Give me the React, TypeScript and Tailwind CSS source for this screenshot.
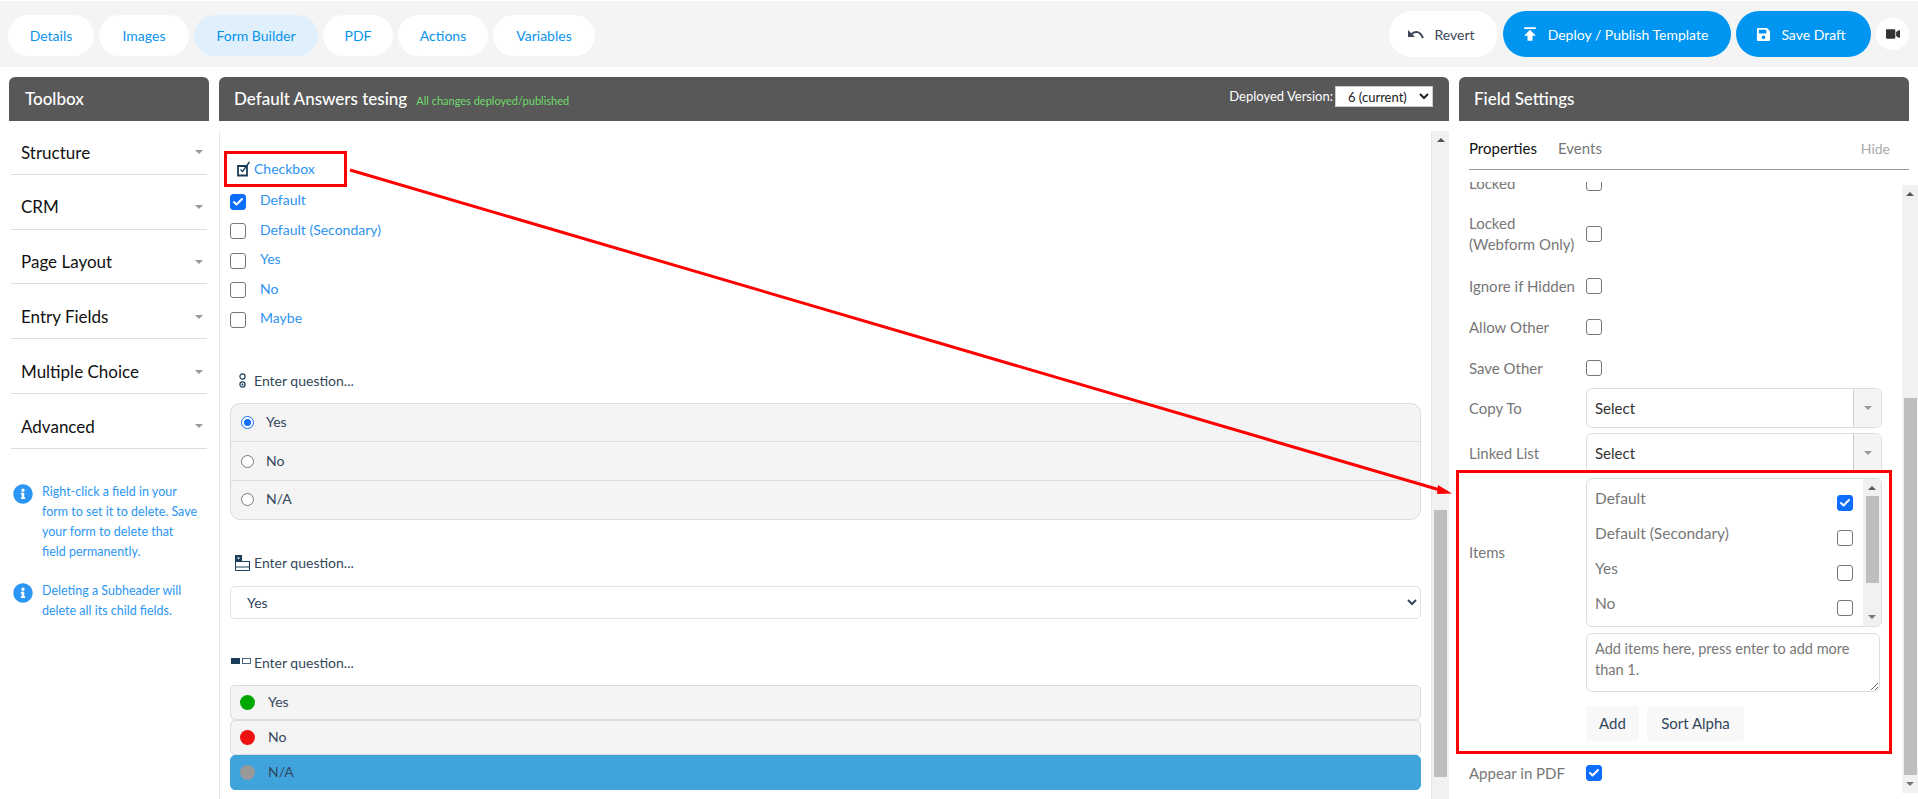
import { FaInfoCircle, FaSave, FaVideo } from 'react-icons/fa';
import { MdPublish } from 'react-icons/md';
import { Check } from 'lucide-react';

const tabs = [
  { label: 'Details', w: 'w-[86px]' },
  { label: 'Images', w: 'w-[90px]' },
  { label: 'Form Builder', w: 'w-[124px]', active: true },
  { label: 'PDF', w: 'w-[70px]' },
  { label: 'Actions', w: 'w-[90px]' },
  { label: 'Variables', w: 'w-[102px]' },
];

const toolbox = ['Structure', 'CRM', 'Page Layout', 'Entry Fields', 'Multiple Choice', 'Advanced'];
const checkOptions = ['Default', 'Default (Secondary)', 'Yes', 'No', 'Maybe'];

function Caret({ className = 'border-t-[#999]' }: { className?: string }) {
  return <span className={`h-0 w-0 border-x-[4px] border-t-[4px] border-x-transparent ${className}`} />;
}

function Box({ checked = false }: { checked?: boolean }) {
  return (
    <span
      className={`flex h-4 w-4 shrink-0 items-center justify-center rounded-[3px] border ${
        checked ? 'border-[#0d6efd] bg-[#0d6efd]' : 'border-[#777] bg-white'
      }`}
    >
      {checked && <Check className="h-3 w-3 text-white" strokeWidth={4} />}
    </span>
  );
}

function Radio({ checked = false }: { checked?: boolean }) {
  return (
    <span
      className={`flex h-[13px] w-[13px] items-center justify-center rounded-full border bg-white ${
        checked ? 'border-[#0d6efd]' : 'border-[#777]'
      }`}
    >
      {checked && <span className="h-[7px] w-[7px] rounded-full bg-[#0d6efd]" />}
    </span>
  );
}

function Question({ icon, className }: { icon: React.ReactNode; className: string }) {
  return (
    <div className={`flex h-5 items-center text-[14px] text-[#33475b] ${className}`}>
      <span className="flex h-5 w-6 items-center">{icon}</span>
      Enter question...
    </div>
  );
}

function ScrollTrack({ thumb, className, down = true }: { thumb: string; className: string; down?: boolean }) {
  return (
    <div className={`flex shrink-0 flex-col items-center bg-[#f1f1f1] ${className}`}>
      <span className="mt-[7px] h-0 w-0 border-x-[4px] border-b-[4px] border-x-transparent border-b-[#555]" />
      <div className={`w-[13px] bg-[#bebebe] ${thumb}`} />
      {down && <span className="mb-[7px] mt-auto h-0 w-0 border-x-[4px] border-t-[4px] border-x-transparent border-t-[#777]" />}
    </div>
  );
}

function SelectBox({ className = '' }: { className?: string }) {
  return (
    <div className={`flex h-10 w-[296px] overflow-hidden rounded-md border border-[#ddd] ${className}`}>
      <div className="flex flex-1 items-center pl-2 text-[15px] text-[#333]">Select</div>
      <div className="flex w-[28px] items-center justify-center border-l border-[#ccc] bg-[#f4f4f4]">
        <Caret />
      </div>
    </div>
  );
}

function Row({ label, className = 'h-[34px]', children }: { label: React.ReactNode; className?: string; children: React.ReactNode }) {
  return (
    <div className={`flex items-center text-[15px] text-[#777] ${className}`}>
      <div className="w-[117px] shrink-0 whitespace-nowrap leading-[21px]">{label}</div>
      {children}
    </div>
  );
}

export default function App() {
  return (
    <div className="relative h-[799px] w-[1918px] overflow-hidden bg-white pt-px font-['Lato','Noto_Sans',sans-serif]">
      {/* Top bar */}
      <div className="flex h-[66px] items-center justify-between bg-[#f4f4f4] pl-2 pr-[9px]">
        <div className="flex gap-[5px] pt-[3px]">
          {tabs.map((t) => (
            <div
              key={t.label}
              className={`flex h-[41px] items-center justify-center rounded-full text-[14px] text-[#0a93ea] ${t.w} ${
                t.active ? 'bg-[#dff0fc]' : 'bg-white'
              }`}
            >
              {t.label}
            </div>
          ))}
        </div>
        <div className="flex items-center gap-[5px]">
          <button className="flex h-[46px] w-[109px] items-center justify-center gap-[10px] rounded-full bg-white pr-[4px] text-[14px] text-[#3d4659]">
            <svg viewBox="0 0 16 10" className="h-[10px] w-4">
              <path d="M0 1v7h7z" fill="currentColor" />
              <path d="M3 5.5C7 1.5 12 2 15 9" fill="none" stroke="currentColor" strokeWidth="2" />
            </svg>
            Revert
          </button>
          <button className="flex h-[46px] w-[228px] items-center justify-center gap-2 rounded-full bg-[#0095f0] pr-[6px] text-[14px] text-white">
            <MdPublish className="h-5 w-5" />
            Deploy / Publish Template
          </button>
          <button className="flex h-[46px] w-[135px] items-center justify-center gap-[10px] rounded-full bg-[#0095f0] pr-[5px] text-[14px] text-white">
            <FaSave className="h-[15px] w-[15px]" />
            Save Draft
          </button>
          <button className="flex h-[32px] w-[33px] items-center justify-center rounded-full bg-white text-[#333]">
            <FaVideo className="h-[14px] w-[14px]" />
          </button>
        </div>
      </div>

      {/* Panels */}
      <div className="mt-[10px] flex h-[722px] pl-[9px]">
        {/* Toolbox */}
        <div className="w-[200px] shrink-0">
          <div className="flex h-11 items-center rounded-t-md bg-[#585858] px-4 text-[17px] font-medium text-white">Toolbox</div>
          <div className="-mt-px px-[2px]">
            {toolbox.map((name) => (
              <div key={name} className="flex h-[54.8px] items-center justify-between border-b border-[#ddd] pl-[10px] pr-[4px] pt-[11px] text-[17px] text-[#111]">
                {name}
                <Caret />
              </div>
            ))}
          </div>
          <div className="mt-[34px] flex flex-col gap-[20px] pl-1 text-[12.5px] leading-[20px] text-[#2b96f3]">
            <div className="flex gap-[9px]">
              <FaInfoCircle className="mt-[1px] h-5 w-5 shrink-0" />
              <p className="-mt-[1px] w-[158px]">Right-click a field in your form to set it to delete. Save your form to delete that field permanently.</p>
            </div>
            <div className="flex gap-[9px]">
              <FaInfoCircle className="mt-[1px] h-5 w-5 shrink-0" />
              <p className="-mt-[1px] w-[158px]">Deleting a Subheader will delete all its child fields.</p>
            </div>
          </div>
        </div>

        {/* Form canvas */}
        <div className="ml-[10px] w-[1230px] shrink-0">
          <div className="flex h-11 items-center justify-between rounded-t-md bg-[#585858] pl-[15px] pr-4 text-white">
            <div className="flex items-center gap-[9px]">
              <span className="text-[17px] font-medium">Default Answers tesing</span>
              <span className="pt-[4px] text-[11px] text-[#6fdc6a]">All changes deployed/published</span>
            </div>
            <div className="mb-[5px] flex items-center gap-[2px] text-[13px]">
              Deployed Version:
              <select defaultValue="6" className="h-[21px] w-[98px] border border-[#ccc] bg-white pl-2 text-[13px] text-[#222]">
                <option value="6">6 (current)</option>
              </select>
            </div>
          </div>
          <div className="mt-[10px] flex h-[668px] overflow-hidden">
            <div className="flex-1 border-l border-[#e6e6e6] pl-[10px] pr-[10px]">
              <div className="-ml-[6px] mt-5 flex h-9 w-[123px] items-center border-[3px] border-[#f00] pl-[10px] text-[14px] text-[#2e93f0]">
                <svg viewBox="0 0 14 16" className="mr-[3px] h-4 w-[14px] text-[#1c3d5a]">
                  <path d="M1 5h9v9.5H1z" fill="none" stroke="currentColor" strokeWidth="1.8" />
                  <path d="M3.5 8.5l2 2L12.5 1" fill="none" stroke="currentColor" strokeWidth="1.4" />
                </svg>
                <span className="mb-px">Checkbox</span>
              </div>
              {checkOptions.map((o, i) => (
                <div key={o} className="flex h-[29.5px] items-center gap-[14px] text-[14px] text-[#2e93f0]">
                  <Box checked={i === 0} />
                  <span className="mb-1">{o}</span>
                </div>
              ))}

              <Question
                className="mt-[36px]"
                icon={
                  <svg viewBox="0 0 7 16" className="ml-[9px] h-4 w-[7px] text-[#1c3d5a]">
                    <circle cx="3.5" cy="3.5" r="2.6" fill="none" stroke="currentColor" strokeWidth="1.2" />
                    <circle cx="3.5" cy="11.5" r="2.6" fill="none" stroke="currentColor" strokeWidth="1.2" />
                    <circle cx="3.5" cy="11.5" r="1" fill="currentColor" />
                  </svg>
                }
              />
              <div className="mt-3 flex h-[117px] flex-col overflow-hidden rounded-[10px] border border-[#dcdcdc] bg-[#f4f4f4] text-[14px] text-[#33475b]">
                {['Yes', 'No', 'N/A'].map((o, i) => (
                  <div key={o} className={`flex flex-1 items-center gap-3 pl-[10px] ${i < 2 ? 'border-b border-[#dcdcdc]' : ''}`}>
                    <Radio checked={i === 0} />
                    <span className="mb-[2px]">{o}</span>
                  </div>
                ))}
              </div>

              <Question
                className="mt-[33px]"
                icon={
                  <svg viewBox="0 0 15 16" className="ml-[5px] h-4 w-[15px] text-[#1c3d5a]">
                    <path d="M0 0h7v6H0z" fill="currentColor" />
                    <path d="M2 2.5h3L3.5 4.5z" fill="#fff" />
                    <path d="M0 6h15v1H0z" fill="currentColor" />
                    <path d="M.5 7v8.5h14V7" fill="none" stroke="currentColor" />
                    <path d="M1 11h13v2H1z" fill="#8aa0ac" />
                  </svg>
                }
              />
              <select defaultValue="Yes" className="mt-[13px] h-[33px] w-full rounded-[5px] border border-[#dde3ea] bg-white pl-[12px] text-[14px] text-[#33475b]">
                <option>Yes</option>
              </select>

              <Question
                className="mt-[34px]"
                icon={
                  <svg viewBox="0 0 20 6" className="ml-[1px] mb-[3px] h-[6px] w-[20px] text-[#1c3d5a]">
                    <rect width="9" height="6" fill="currentColor" />
                    <rect x="11.5" y=".5" width="8" height="5" fill="none" stroke="currentColor" strokeWidth=".8" />
                  </svg>
                }
              />
              <div className="mt-3 flex flex-col text-[14px] text-[#33475b]">
                {[
                  { o: 'Yes', dot: 'bg-[#00a800]', row: 'border-[#dcdcdc] bg-[#f4f4f4]' },
                  { o: 'No', dot: 'bg-[#ee1111]', row: 'border-[#dcdcdc] bg-[#f4f4f4]' },
                  { o: 'N/A', dot: 'bg-[#999]', row: 'border-[#3fa4dc] bg-[#3fa4dc]' },
                ].map((r) => (
                  <div key={r.o} className={`flex h-[35px] items-center gap-[13px] rounded-[5px] border pl-[9px] ${r.row}`}>
                    <span className={`h-[15px] w-[15px] rounded-full ${r.dot}`} />
                    <span className="mb-[2px]">{r.o}</span>
                  </div>
                ))}
              </div>
            </div>
            <ScrollTrack className="w-[18px] border-l border-[#e6e6e6]" thumb="mt-[368px] h-[267px]" down={false} />
          </div>
        </div>

        {/* Field settings */}
        <div className="ml-[10px] flex min-w-0 flex-1 flex-col">
          <div className="mr-[9px] flex h-11 items-center rounded-t-md bg-[#585858] pl-[15px] text-[17px] font-medium text-white">Field Settings</div>
          <div className="mr-[9px] ml-[10px] mt-[10px] flex h-[39px] items-center justify-between border-b border-[#999] pb-[3px] pr-[19px] text-[15px]">
            <div className="flex gap-[21px]">
              <span className="text-[#111]">Properties</span>
              <span className="text-[#777]">Events</span>
            </div>
            <span className="text-[14px] text-[#aaa]">Hide</span>
          </div>
          <div className="flex min-h-0 flex-1">
            <div className="-ml-[6px] mt-[12px] flex-1 overflow-hidden pl-[16px]">
              <div className="-mt-[16px] flex flex-col">
                <Row label="Locked"><Box /></Row>
                <Row label={<>Locked<br />(Webform Only)</>} className="mt-2 h-[52px]"><Box /></Row>
                <Row label="Ignore if Hidden" className="mt-[9px] h-[34px]"><Box /></Row>
                <Row label="Allow Other" className="mt-[7px] h-[34px]"><Box /></Row>
                <Row label="Save Other" className="mt-[7px] h-[34px]"><Box /></Row>
                <Row label="Copy To" className="mt-[3px] h-10"><SelectBox /></Row>
                <Row label="Linked List" className="mt-[5px] h-10"><SelectBox /></Row>
                <div className="relative -ml-[13px] -mt-[3px] h-[284px] w-[436px] border-[3px] border-[#f00] bg-white pl-[10px] pt-[5px]">
                  <Row label="Items" className="h-[149px]">
                    <div className="flex h-[149px] w-[296px] overflow-hidden rounded-md border border-[#ddd]">
                      <div className="flex-1 pl-2 pr-[10px] pt-[6px] text-[15.5px]">
                        {['Default', 'Default (Secondary)', 'Yes', 'No'].map((o, i) => (
                          <div key={o} className="flex h-[35px] items-center justify-between">
                            <span className="mb-[7px]">{o}</span>
                            <Box checked={i === 0} />
                          </div>
                        ))}
                      </div>
                      <ScrollTrack className="w-[18px]" thumb="mt-[6px] h-[87px]" />
                    </div>
                  </Row>
                  <textarea
                    className="ml-[117px] mt-[6px] block h-[59px] w-[294px] rounded-md border border-[#ddd] px-2 py-1 text-[14.5px] leading-[21px] placeholder:text-[#777]"
                    placeholder="Add items here, press enter to add more than 1."
                  />
                  <div className="ml-[117px] mt-[14px] flex gap-2 text-[15px] text-[#33475b]">
                    <button className="h-[35px] w-[53px] rounded bg-[#f8f8f8]">Add</button>
                    <button className="h-[35px] w-[97px] rounded bg-[#f8f8f8]">Sort Alpha</button>
                  </div>
                </div>
                <Row label="Appear in PDF" className="mt-1 h-[30px]"><Box checked /></Row>
              </div>
            </div>
            <ScrollTrack className="mt-[15px] mb-[6px] w-4" thumb="mt-[202px] h-[377px]" />
          </div>
        </div>
      </div>

      {/* Annotation arrow */}
      <svg className="pointer-events-none absolute left-0 top-0 h-[799px] w-[1918px]" viewBox="0 0 1918 799">
        <line x1="350" y1="170" x2="1440" y2="490" stroke="#f00" strokeWidth="3" />
        <polygon points="1452,493.5 1438,485 1437,494" fill="#f00" />
      </svg>
    </div>
  );
}
